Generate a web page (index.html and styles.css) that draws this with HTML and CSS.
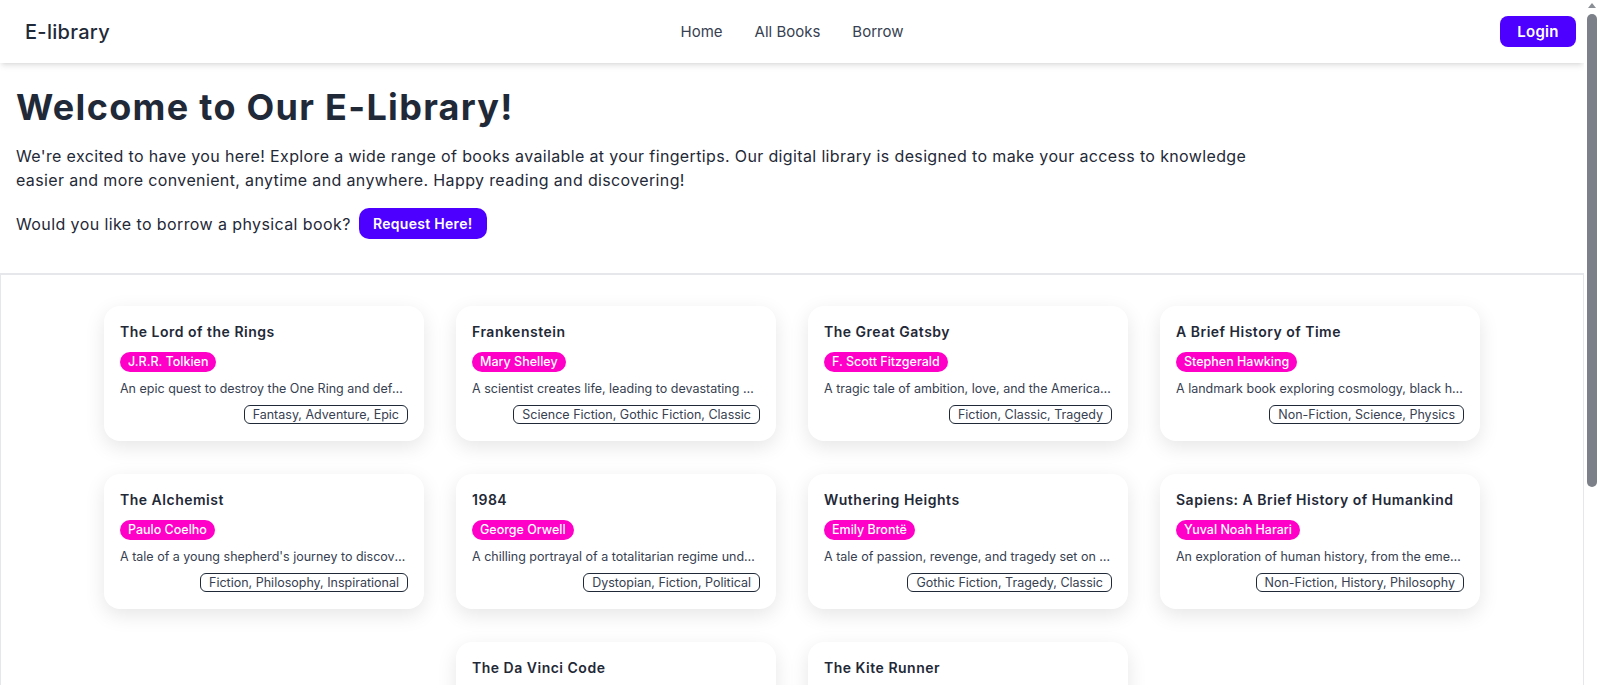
FILE: index.html
```html
<!DOCTYPE html>
<html lang="en">
<head>
<meta charset="utf-8">
<title>E-library</title>
<link rel="stylesheet" href="styles.css">
</head>
<body>
<div class="page">
<header class="topbar">
  <div class="brand">E-library</div>
  <nav class="nav">
    <a href="#" class="nav-link">Home</a>
    <a href="#" class="nav-link">All Books</a>
    <a href="#" class="nav-link">Borrow</a>
  </nav>
  <div class="actions"><button class="btn btn-login">Login</button></div>
</header>

<section class="hero">
  <h1 class="hero-title">Welcome to Our E-Library!</h1>
  <p class="hero-text">We're excited to have you here! Explore a wide range of books available at your fingertips. Our digital library is designed to make your access to knowledge easier and more convenient, anytime and anywhere. Happy reading and discovering!</p>
  <div class="hero-cta">
    <span>Would you like to borrow a physical book?</span>
    <button class="btn btn-request">Request Here!</button>
  </div>
</section>

<main class="books">
  <article class="card">
    <h3 class="card-title">The Lord of the Rings</h3>
    <span class="author">J.R.R. Tolkien</span>
    <p class="desc">An epic quest to destroy the One Ring and defeat the Dark Lord Sauron.</p>
    <div class="tags"><span class="tag">Fantasy, Adventure, Epic</span></div>
  </article>
  <article class="card">
    <h3 class="card-title">Frankenstein</h3>
    <span class="author">Mary Shelley</span>
    <p class="desc">A scientist creates life, leading to devastating consequences.</p>
    <div class="tags"><span class="tag">Science Fiction, Gothic Fiction, Classic</span></div>
  </article>
  <article class="card">
    <h3 class="card-title">The Great Gatsby</h3>
    <span class="author">F. Scott Fitzgerald</span>
    <p class="desc">A tragic tale of ambition, love, and the American Dream in the Jazz Age.</p>
    <div class="tags"><span class="tag">Fiction, Classic, Tragedy</span></div>
  </article>
  <article class="card">
    <h3 class="card-title">A Brief History of Time</h3>
    <span class="author">Stephen Hawking</span>
    <p class="desc">A landmark book exploring cosmology, black holes, and the nature of time.</p>
    <div class="tags"><span class="tag">Non-Fiction, Science, Physics</span></div>
  </article>
  <article class="card">
    <h3 class="card-title">The Alchemist</h3>
    <span class="author">Paulo Coelho</span>
    <p class="desc">A tale of a young shepherd's journey to discover his personal legend.</p>
    <div class="tags"><span class="tag">Fiction, Philosophy, Inspirational</span></div>
  </article>
  <article class="card">
    <h3 class="card-title">1984</h3>
    <span class="author">George Orwell</span>
    <p class="desc">A chilling portrayal of a totalitarian regime under constant surveillance.</p>
    <div class="tags"><span class="tag">Dystopian, Fiction, Political</span></div>
  </article>
  <article class="card">
    <h3 class="card-title">Wuthering Heights</h3>
    <span class="author">Emily Brontë</span>
    <p class="desc">A tale of passion, revenge, and tragedy set on the Yorkshire moors.</p>
    <div class="tags"><span class="tag">Gothic Fiction, Tragedy, Classic</span></div>
  </article>
  <article class="card">
    <h3 class="card-title">Sapiens: A Brief History of Humankind</h3>
    <span class="author">Yuval Noah Harari</span>
    <p class="desc">An exploration of human history, from the emergence of Homo sapiens to today.</p>
    <div class="tags"><span class="tag">Non-Fiction, History, Philosophy</span></div>
  </article>
  <article class="card">
    <h3 class="card-title">The Da Vinci Code</h3>
    <span class="author">Dan Brown</span>
    <p class="desc">A symbologist uncovers a secret society guarding a historic mystery.</p>
    <div class="tags"><span class="tag">Mystery, Thriller, Fiction</span></div>
  </article>
  <article class="card">
    <h3 class="card-title">The Kite Runner</h3>
    <span class="author">Khaled Hosseini</span>
    <p class="desc">A story of friendship, betrayal, and redemption set in Afghanistan.</p>
    <div class="tags"><span class="tag">Fiction, Drama, Historical</span></div>
  </article>
</main>
</div>
<div class="scrollbar" aria-hidden="true">
  <span class="scroll-arrow"></span>
  <span class="scroll-thumb"></span>
</div>
</body>
</html>
```

FILE: styles.css
```css
* { box-sizing: border-box; }

html, body {
  margin: 0;
  padding: 0;
  background: #ffffff;
}

body {
  font-family: "Inter", "Open Sans", sans-serif;
  color: #1f2937;
}

.page {
  margin-right: 15px;
}

.scrollbar {
  position: fixed;
  top: 0;
  right: 0;
  width: 15px;
  height: 100vh;
  background: #ffffff;
  z-index: 10;
  display: flex;
  flex-direction: column;
  align-items: center;
}

.scroll-arrow {
  margin-top: 3px;
  width: 0;
  height: 0;
  border-left: 4px solid transparent;
  border-right: 4px solid transparent;
  border-bottom: 5px solid #8a8f96;
}

.scroll-thumb {
  margin-top: 6px;
  margin-left: 1px;
  width: 10px;
  height: 473px;
  border-radius: 5px;
  background: #7c8189;
}

.topbar {
  height: 63px;
  display: grid;
  grid-template-columns: 1fr auto 1fr;
  align-items: center;
  padding: 0 8px;
  background: #fff;
  box-shadow: 0 4px 6px -1px rgba(0,0,0,0.10), 0 2px 4px -2px rgba(0,0,0,0.08);
  position: relative;
  z-index: 2;
}

.brand {
  padding-left: 17px;
  font-size: 20px;
  font-weight: 500;
  color: #1f2937;
  letter-spacing: 0.3px;
}

.nav {
  display: flex;
  gap: 32px;
}

.nav-link {
  font-size: 15px;
  font-weight: 400;
  color: #374151;
  text-decoration: none;
}

.actions {
  display: flex;
  justify-content: flex-end;
}

.btn {
  font-family: inherit;
  border: none;
  background: #4d00ff;
  color: #ffffff;
  font-weight: 600;
  cursor: pointer;
}

.btn-login {
  width: 76px;
  height: 31px;
  border-radius: 8px;
  font-size: 15px;
  letter-spacing: 0.3px;
}

.hero {
  padding: 24px 16px 34px 16px;
}

.hero-title {
  margin: 0;
  font-size: 36px;
  line-height: 40px;
  font-weight: 700;
  letter-spacing: 1.3px;
  color: #1f2937;
}

.hero-text {
  margin: 17px 0 0 0;
  max-width: 1265px;
  font-size: 16px;
  line-height: 24px;
  letter-spacing: 0.36px;
  color: #1f2937;
}

.hero-cta {
  margin-top: 16px;
  display: flex;
  align-items: center;
  gap: 8px;
  font-size: 16px;
  letter-spacing: 0.4px;
}

.btn-request {
  width: 128px;
  height: 31px;
  border-radius: 10px;
  font-size: 14px;
  letter-spacing: 0.3px;
}

.books {
  border-top: 2px solid #e5e7eb;
  border-left: 1px solid #e5e7eb;
  border-right: 1px solid #e5e7eb;
  padding: 31px 0 170px 0;
  display: flex;
  flex-wrap: wrap;
  justify-content: center;
  gap: 33px 32px;
}

.card {
  width: 320px;
  padding: 16px 16px 17px 16px;
  border-radius: 16px;
  background: #fff;
  box-shadow: 0 6px 20px rgba(0,0,0,0.10);
  display: flex;
  flex-direction: column;
  align-items: flex-start;
}

.card-title {
  margin: 0;
  font-size: 14px;
  line-height: 20px;
  font-weight: 600;
  letter-spacing: 0.5px;
  color: #1f2937;
}

.author {
  margin-top: 10px;
  height: 20px;
  line-height: 20px;
  padding: 0 8px;
  border-radius: 10px;
  background: #ff00c8;
  color: #ffffff;
  font-size: 12.5px;
  font-weight: 500;
}

.desc {
  margin: 7px 0 0 0;
  width: 100%;
  font-size: 12.5px;
  line-height: 20px;
  color: #374151;
  white-space: nowrap;
  overflow: hidden;
  text-overflow: ellipsis;
}

.tags {
  margin-top: 6px;
  width: 100%;
  display: flex;
  justify-content: flex-end;
}

.tag {
  height: 19px;
  line-height: 17px;
  padding: 0 8px;
  border: 1px solid #1f2937;
  border-radius: 6px;
  font-size: 12.5px;
  color: #374151;
}
```
